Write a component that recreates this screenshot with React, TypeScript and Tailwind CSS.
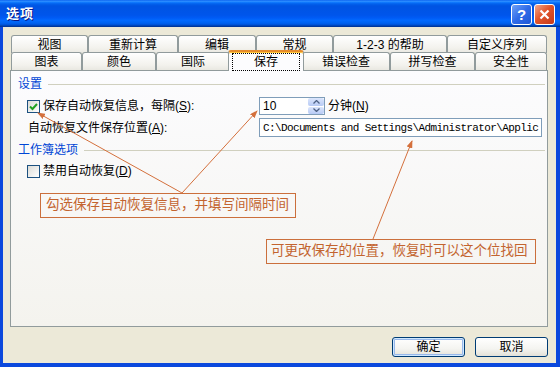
import React from 'react'

const FONT = "font-['Liberation_Sans','Noto_Sans_CJK_SC',sans-serif]"

const ROW1 = [
  { label: '视图', w: 77 },
  { label: '重新计算', w: 90 },
  { label: '编辑', w: 78 },
  { label: '常规', w: 77 },
  { label: '1-2-3 的帮助', w: 114 },
  { label: '自定义序列', w: 100 },
]

const ROW2 = [
  { label: '图表', w: 71 },
  { label: '颜色', w: 74 },
  { label: '国际', w: 74 },
  { label: '保存', w: 72, active: true },
  { label: '错误检查', w: 88 },
  { label: '拼写检查', w: 85 },
  { label: '安全性', w: 72 },
]

function Tab({ label, w, h }: { label: string; w: number; h: number }) {
  return (
    <div
      className="flex items-center justify-center border border-b-0 border-[#919B9C] rounded-t-[3px] bg-[linear-gradient(to_bottom,#FFFFFF,#F3F2ED_70%,#E9E8E1)] text-[12px] leading-[14px] text-black"
      style={{ width: w, height: h }}
    >
      {label}
    </div>
  )
}

function ActiveTab({ label, w }: { label: string; w: number }) {
  return (
    <div
      className="relative z-10 -mx-[2px] -mt-[2px] h-[21px] flex items-center justify-center border-x border-[#919B9C] border-t-2 border-t-[#E68B2C] rounded-t-[3px] bg-[#FCFCFE] shadow-[inset_0_1px_0_#FFC73C] text-[12px] leading-[14px] text-black"
      style={{ width: w + 4 }}
    >
      <span className="w-[66px] h-[16px] flex items-center justify-center outline outline-1 outline-dotted outline-black">{label}</span>
    </div>
  )
}

function Checkbox({ checked }: { checked?: boolean }) {
  return (
    <div className="w-[13px] h-[13px] border border-[#1C5180] bg-[linear-gradient(135deg,#DCDCD7,#FFFFFF)] flex items-center justify-center shrink-0">
      {checked && (
        <svg width="9" height="9" viewBox="0 0 9 9">
          <path d="M1 4.5 L3.5 7 L8 2" stroke="#21A121" strokeWidth="2" fill="none" />
        </svg>
      )}
    </div>
  )
}

function GroupHeader({ label }: { label: string }) {
  return (
    <div className="flex items-center">
      <span className="text-[12px] leading-[14px] text-[#0046D5]">{label}</span>
      <div className="flex-1 h-px bg-[#D0D0BF] ml-[6px] mr-[2px]" />
    </div>
  )
}

function XpButton({ label, primary }: { label: string; primary?: boolean }) {
  return (
    <div
      className={
        'w-[73px] h-[20px] flex items-center justify-center rounded-[3px] border border-[#003C74] bg-[linear-gradient(to_bottom,#FFFFFF,#F4F4F0_60%,#E3E1D8)] text-[12px] leading-[14px] text-black ' +
        (primary ? 'shadow-[inset_0_0_0_1px_#CEE7FF,inset_0_0_0_2px_#98B8EA]' : '')
      }
    >
      {label}
    </div>
  )
}

export default function App() {
  return (
    <div className={`relative w-[560px] h-[367px] flex flex-col bg-[#0B48DD] ${FONT}`}>
      {/* title bar */}
      <div className="h-[27px] shrink-0 flex items-center justify-between pl-[6px] pr-[5px] bg-[linear-gradient(to_bottom,#0058EE_0%,#3593FF_4%,#127DFF_8%,#0262EE_14%,#0057E5_20%,#0054E3_24%,#0055EB_56%,#005BF5_66%,#026AFE_76%,#0062EF_86%,#0052D6_92%,#0040AB_96%,#003092_100%)]">
        <span className="text-[13px] font-bold text-white [text-shadow:1px_1px_#0A1883] tracking-[1px]">选项</span>
        <div className="flex gap-[2px] mt-[1px]">
          <div className="w-[21px] h-[21px] rounded-[3px] border border-white bg-[linear-gradient(135deg,#6FA1F7,#2F6BE8_50%,#1F57D6)] flex items-center justify-center text-white text-[15px] font-bold leading-none">
            ?
          </div>
          <div className="w-[21px] h-[21px] rounded-[3px] border border-white bg-[linear-gradient(135deg,#F0A88E,#E2552B_45%,#C4391A)] flex items-center justify-center">
            <svg width="11" height="11" viewBox="0 0 11 11">
              <path d="M1.5 1.5 L9.5 9.5 M9.5 1.5 L1.5 9.5" stroke="white" strokeWidth="2.2" />
            </svg>
          </div>
        </div>
      </div>

      {/* body */}
      <div className="flex-1 ml-[3px] mr-[4px] mb-[4px] bg-[#ECE9D8] pt-[8px] pl-[7px] pr-[8px] flex flex-col">
        <div className="flex h-[17px] pl-[1px] items-start">
          {ROW1.map((t) => (
            <Tab key={t.label} label={t.label} w={t.w} h={18} />
          ))}
        </div>
        <div className="flex h-[18px] pl-[1px] items-start">
          {ROW2.map((t) =>
            t.active ? (
              <ActiveTab key={t.label} label={t.label} w={t.w} />
            ) : (
              <Tab key={t.label} label={t.label} w={t.w} h={18} />
            )
          )}
        </div>

        {/* tab page */}
        <div className="h-[257px] border border-[#919B9C] bg-[linear-gradient(to_bottom,#FCFCFE,#F4F3EE)] pl-[7px] pt-[6px] text-[12px] leading-[14px] text-black">
          <GroupHeader label="设置" />
          <div className="mt-[6px] pl-[9px] grid grid-cols-[232px_1fr] gap-y-[3px]">
            <div className="h-[18px] flex items-center gap-[3px]">
              <Checkbox checked />
              <span>
                保存自动恢复信息，每隔(<u>S</u>):
              </span>
            </div>
            <div className="h-[18px] flex items-center">
              <div className="w-[66px] h-[18px] border border-[#7F9DB9] bg-white flex items-center justify-between">
                <span className="pl-[3px]">10</span>
                <div className="w-[16px] h-[16px] flex flex-col gap-px">
                  <div className="flex-1 rounded-[2px] bg-[linear-gradient(to_bottom,#DCE6FC,#B7CAF5)] flex items-center justify-center">
                    <svg width="7" height="4" viewBox="0 0 7 4">
                      <path d="M0.5 3.5 L3.5 0.5 L6.5 3.5" stroke="#4D6185" strokeWidth="1.3" fill="none" />
                    </svg>
                  </div>
                  <div className="flex-1 rounded-[2px] bg-[linear-gradient(to_bottom,#DCE6FC,#B7CAF5)] flex items-center justify-center">
                    <svg width="7" height="4" viewBox="0 0 7 4">
                      <path d="M0.5 0.5 L3.5 3.5 L6.5 0.5" stroke="#4D6185" strokeWidth="1.3" fill="none" />
                    </svg>
                  </div>
                </div>
              </div>
              <span className="ml-[3px]">
                分钟(<u>N</u>)
              </span>
            </div>
            <div className="h-[19px] flex items-center pl-[1px]">
              自动恢复文件保存位置(<u>A</u>):
            </div>
            <div className="h-[19px] w-[283px] border border-[#7F9DB9] bg-white overflow-hidden whitespace-nowrap flex items-center pl-[3px] font-['Liberation_Mono',monospace] text-[11px] tracking-[-0.62px]">
              {'C:\\Documents and Settings\\Administrator\\Applic'}
            </div>
          </div>

          <div className="mt-[6px]">
            <GroupHeader label="工作簿选项" />
          </div>
          <div className="mt-[7px] pl-[9px] h-[14px] flex items-center gap-[3px]">
            <Checkbox />
            <span>
              禁用自动恢复(<u>D</u>)
            </span>
          </div>
        </div>

        <div className="mt-[10px] flex justify-end gap-[10px]">
          <XpButton label="确定" primary />
          <XpButton label="取消" />
        </div>
      </div>

      {/* callouts */}
      <div className="absolute left-[40px] top-[193px] w-[256px] h-[25px] border border-[#CB6F3C] flex items-center pl-[5px] text-[13.5px] text-[#C3642F] whitespace-nowrap">
        勾选保存自动恢复信息，并填写间隔时间
      </div>
      <div className="absolute left-[266px] top-[239px] w-[270px] h-[25px] border border-[#CB6F3C] flex items-center pl-[4px] text-[13.5px] text-[#C3642F] whitespace-nowrap">
        可更改保存的位置，恢复时可以这个位找回
      </div>
      <svg className="absolute inset-0 pointer-events-none" width="560" height="367">
        <defs>
          <marker id="ah" markerWidth="8" markerHeight="6" refX="7" refY="3" orient="auto" markerUnits="userSpaceOnUse">
            <path d="M0 0 L8 3 L0 6 Z" fill="#D4703C" />
          </marker>
        </defs>
        <line x1="182" y1="193" x2="38" y2="113" stroke="#D4703C" strokeWidth="1" markerEnd="url(#ah)" />
        <line x1="182" y1="193" x2="257" y2="111" stroke="#D4703C" strokeWidth="1" markerEnd="url(#ah)" />
        <line x1="373" y1="239" x2="412" y2="141" stroke="#D4703C" strokeWidth="1" markerEnd="url(#ah)" />
      </svg>
    </div>
  )
}
